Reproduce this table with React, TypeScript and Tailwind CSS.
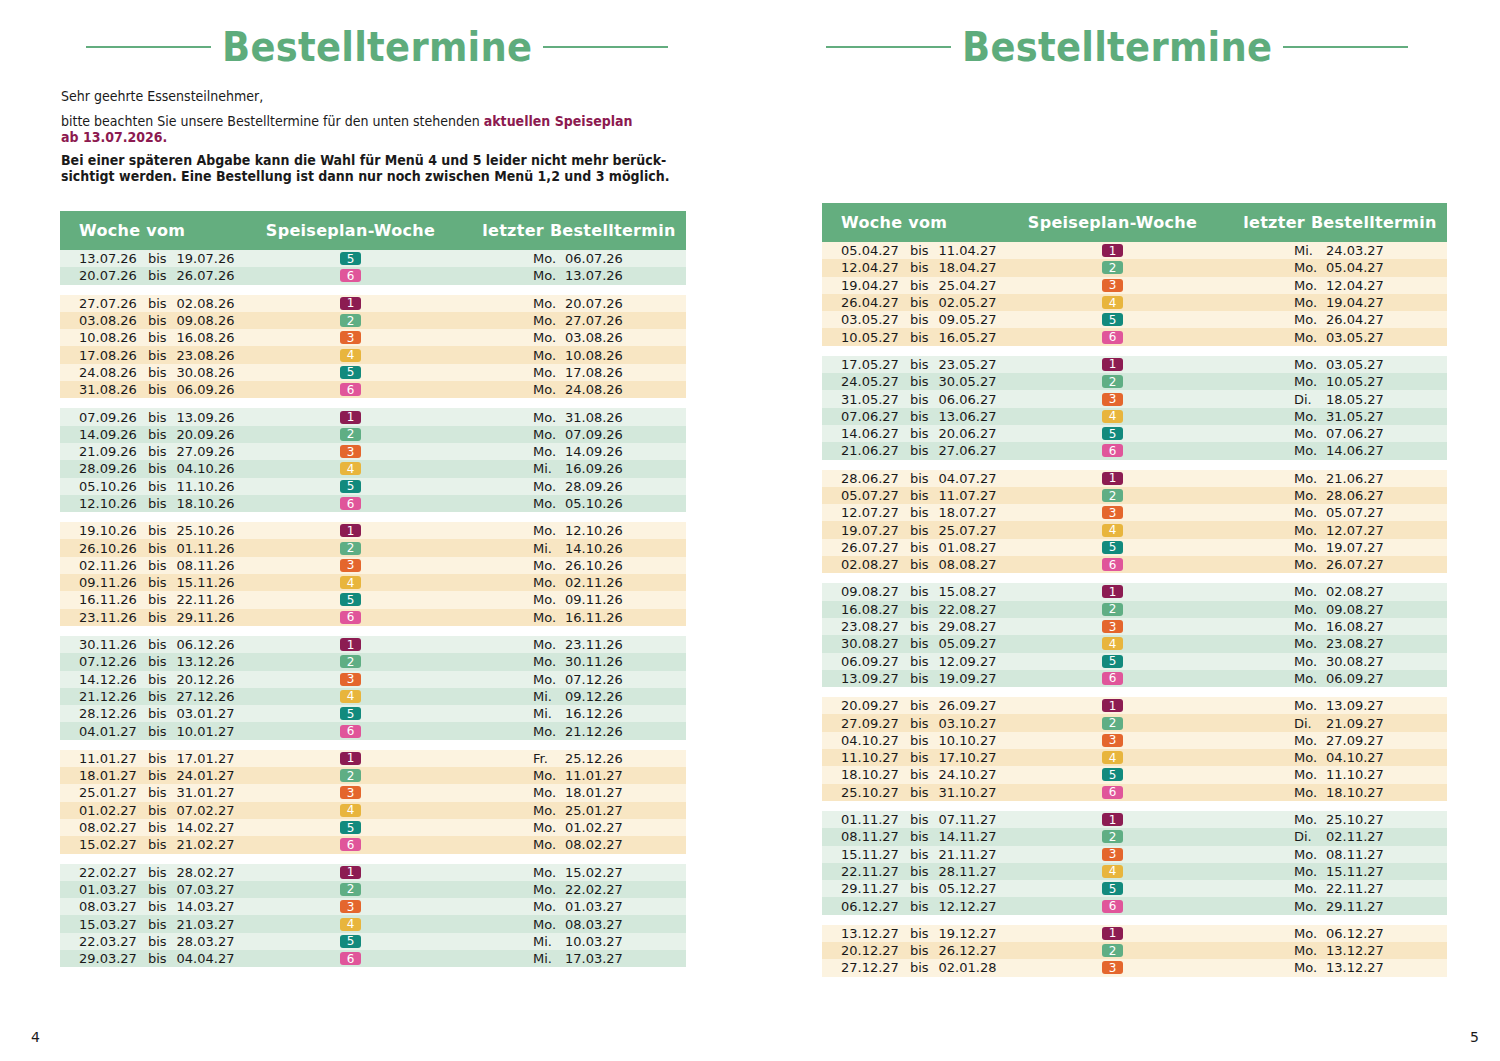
import React from "react";

type Row = [string, string, number, string, string];

const parse = (s: string): Row[] =>
  s
    .trim()
    .split("\n")
    .map((l) => {
      const p = l.trim().split(/\s+/);
      return [p[0], p[1], Number(p[2]), p[3], p[4]];
    });

const leftGroups: { tone: "g" | "b"; rows: Row[] }[] = [
  { tone: "g", rows: parse(`
13.07.26 19.07.26 5 Mo. 06.07.26
20.07.26 26.07.26 6 Mo. 13.07.26`) },
  { tone: "b", rows: parse(`
27.07.26 02.08.26 1 Mo. 20.07.26
03.08.26 09.08.26 2 Mo. 27.07.26
10.08.26 16.08.26 3 Mo. 03.08.26
17.08.26 23.08.26 4 Mo. 10.08.26
24.08.26 30.08.26 5 Mo. 17.08.26
31.08.26 06.09.26 6 Mo. 24.08.26`) },
  { tone: "g", rows: parse(`
07.09.26 13.09.26 1 Mo. 31.08.26
14.09.26 20.09.26 2 Mo. 07.09.26
21.09.26 27.09.26 3 Mo. 14.09.26
28.09.26 04.10.26 4 Mi. 16.09.26
05.10.26 11.10.26 5 Mo. 28.09.26
12.10.26 18.10.26 6 Mo. 05.10.26`) },
  { tone: "b", rows: parse(`
19.10.26 25.10.26 1 Mo. 12.10.26
26.10.26 01.11.26 2 Mi. 14.10.26
02.11.26 08.11.26 3 Mo. 26.10.26
09.11.26 15.11.26 4 Mo. 02.11.26
16.11.26 22.11.26 5 Mo. 09.11.26
23.11.26 29.11.26 6 Mo. 16.11.26`) },
  { tone: "g", rows: parse(`
30.11.26 06.12.26 1 Mo. 23.11.26
07.12.26 13.12.26 2 Mo. 30.11.26
14.12.26 20.12.26 3 Mo. 07.12.26
21.12.26 27.12.26 4 Mi. 09.12.26
28.12.26 03.01.27 5 Mi. 16.12.26
04.01.27 10.01.27 6 Mo. 21.12.26`) },
  { tone: "b", rows: parse(`
11.01.27 17.01.27 1 Fr. 25.12.26
18.01.27 24.01.27 2 Mo. 11.01.27
25.01.27 31.01.27 3 Mo. 18.01.27
01.02.27 07.02.27 4 Mo. 25.01.27
08.02.27 14.02.27 5 Mo. 01.02.27
15.02.27 21.02.27 6 Mo. 08.02.27`) },
  { tone: "g", rows: parse(`
22.02.27 28.02.27 1 Mo. 15.02.27
01.03.27 07.03.27 2 Mo. 22.02.27
08.03.27 14.03.27 3 Mo. 01.03.27
15.03.27 21.03.27 4 Mo. 08.03.27
22.03.27 28.03.27 5 Mi. 10.03.27
29.03.27 04.04.27 6 Mi. 17.03.27`) },
];

const rightGroups: { tone: "g" | "b"; rows: Row[] }[] = [
  { tone: "b", rows: parse(`
05.04.27 11.04.27 1 Mi. 24.03.27
12.04.27 18.04.27 2 Mo. 05.04.27
19.04.27 25.04.27 3 Mo. 12.04.27
26.04.27 02.05.27 4 Mo. 19.04.27
03.05.27 09.05.27 5 Mo. 26.04.27
10.05.27 16.05.27 6 Mo. 03.05.27`) },
  { tone: "g", rows: parse(`
17.05.27 23.05.27 1 Mo. 03.05.27
24.05.27 30.05.27 2 Mo. 10.05.27
31.05.27 06.06.27 3 Di. 18.05.27
07.06.27 13.06.27 4 Mo. 31.05.27
14.06.27 20.06.27 5 Mo. 07.06.27
21.06.27 27.06.27 6 Mo. 14.06.27`) },
  { tone: "b", rows: parse(`
28.06.27 04.07.27 1 Mo. 21.06.27
05.07.27 11.07.27 2 Mo. 28.06.27
12.07.27 18.07.27 3 Mo. 05.07.27
19.07.27 25.07.27 4 Mo. 12.07.27
26.07.27 01.08.27 5 Mo. 19.07.27
02.08.27 08.08.27 6 Mo. 26.07.27`) },
  { tone: "g", rows: parse(`
09.08.27 15.08.27 1 Mo. 02.08.27
16.08.27 22.08.27 2 Mo. 09.08.27
23.08.27 29.08.27 3 Mo. 16.08.27
30.08.27 05.09.27 4 Mo. 23.08.27
06.09.27 12.09.27 5 Mo. 30.08.27
13.09.27 19.09.27 6 Mo. 06.09.27`) },
  { tone: "b", rows: parse(`
20.09.27 26.09.27 1 Mo. 13.09.27
27.09.27 03.10.27 2 Di. 21.09.27
04.10.27 10.10.27 3 Mo. 27.09.27
11.10.27 17.10.27 4 Mo. 04.10.27
18.10.27 24.10.27 5 Mo. 11.10.27
25.10.27 31.10.27 6 Mo. 18.10.27`) },
  { tone: "g", rows: parse(`
01.11.27 07.11.27 1 Mo. 25.10.27
08.11.27 14.11.27 2 Di. 02.11.27
15.11.27 21.11.27 3 Mo. 08.11.27
22.11.27 28.11.27 4 Mo. 15.11.27
29.11.27 05.12.27 5 Mo. 22.11.27
06.12.27 12.12.27 6 Mo. 29.11.27`) },
  { tone: "b", rows: parse(`
13.12.27 19.12.27 1 Mo. 06.12.27
20.12.27 26.12.27 2 Mo. 13.12.27
27.12.27 02.01.28 3 Mo. 13.12.27`) },
];

const badgeBg: Record<number, string> = {
  1: "bg-[#8c1c52]",
  2: "bg-[#5fae84]",
  3: "bg-[#e4662d]",
  4: "bg-[#e8b53d]",
  5: "bg-[#128a7d]",
  6: "bg-[#e0559a]",
};

const rowBg = {
  g: ["bg-[#e7f2ea]", "bg-[#d3e8db]"],
  b: ["bg-[#fcf3e0]", "bg-[#f8e6c3]"],
};

function Title() {
  return (
    <div className="flex items-center">
      <div className="h-[2px] w-[125px] bg-[#63ad7f]" />
      <div className="mx-[11px] text-[41px] leading-[48px] font-bold tracking-[0.3px] text-[#5eac7c] font-['DejaVu_Sans_Condensed','DejaVu_Sans',sans-serif]">
        Bestelltermine
      </div>
      <div className="h-[2px] w-[125px] bg-[#63ad7f]" />
    </div>
  );
}

function Table({ groups, width }: { groups: { tone: "g" | "b"; rows: Row[] }[]; width: string }) {
  return (
    <div className={`${width} flex flex-col gap-[10px] font-['DejaVu_Sans',sans-serif]`}>
      <div>
        <div className="grid h-[39px] grid-cols-[200px_181px_1fr_214px] items-center bg-[#64ae7f] text-[16px] font-bold tracking-[0.3px] text-white">
          <div className="pl-[19px]">Woche vom</div>
          <div className="text-center whitespace-nowrap">Speiseplan-Woche</div>
          <div />
          <div className="text-center whitespace-nowrap">letzter Bestelltermin</div>
        </div>
        {groups[0] && <Group g={groups[0]} />}
      </div>
      {groups.slice(1).map((g, i) => (
        <Group key={i} g={g} />
      ))}
    </div>
  );
}

function Group({ g }: { g: { tone: "g" | "b"; rows: Row[] } }) {
  return (
    <div className="flex flex-col">
      {g.rows.map((r, i) => (
        <div
          key={i}
          className={`grid h-[17.3px] grid-cols-[200px_181px_1fr_214px] items-center text-[13px] leading-none text-[#1a1a1a] ${rowBg[g.tone][i % 2]}`}
        >
          <div className="flex pl-[19px] whitespace-nowrap">
            <span>{r[0]}</span>
            <span className="ml-[11px]">bis</span>
            <span className="ml-[10px]">{r[1]}</span>
          </div>
          <div className="flex justify-center">
            <span
              className={`flex h-[13px] w-[21px] items-center justify-center rounded-[3px] text-[12px] leading-none text-white ${badgeBg[r[2]]}`}
            >
              {r[2]}
            </span>
          </div>
          <div />
          <div className="flex pl-[61px] whitespace-nowrap">
            <span className="w-[32px]">{r[3]}</span>
            <span>{r[4]}</span>
          </div>
        </div>
      ))}
    </div>
  );
}

export default function App() {
  return (
    <div className="flex h-[1061px] w-[1500px] bg-white font-['DejaVu_Sans',sans-serif] text-[#1a1a1a]">
      <div className="flex h-full w-[750px] flex-col">
        <div className="pl-[86px] pt-[23px]">
          <Title />
        </div>
        <div className="mt-[17px] pl-[61px] text-[14px] leading-[16px] whitespace-nowrap font-['DejaVu_Sans_Condensed','DejaVu_Sans',sans-serif]">
          <p>Sehr geehrte Essensteilnehmer,</p>
          <p className="mt-[9px]">
            bitte beachten Sie unsere Bestelltermine für den unten stehenden{" "}
            <span className="font-bold text-[#8c1a50]">aktuellen Speiseplan</span>
            <br />
            <span className="font-bold text-[#8c1a50]">ab 13.07.2026.</span>
          </p>
          <p className="mt-[7px] font-bold">
            Bei einer späteren Abgabe kann die Wahl für Menü 4 und 5 leider nicht mehr berück-
            <br />
            sichtigt werden. Eine Bestellung ist dann nur noch zwischen Menü 1,2 und 3 möglich.
          </p>
        </div>
        <div className="mt-[27px] pl-[60px]">
          <Table groups={leftGroups} width="w-[626px]" />
        </div>
        <div className="mt-auto pb-[16px] pl-[31px] text-[14px] leading-[16px]">4</div>
      </div>
      <div className="flex h-full w-[750px] flex-col">
        <div className="pl-[76px] pt-[23px]">
          <Title />
        </div>
        <div className="mt-[132px] pl-[72px]">
          <Table groups={rightGroups} width="w-[625px]" />
        </div>
        <div className="mt-auto flex justify-end pb-[16px] pr-[21px] text-[14px] leading-[16px]">5</div>
      </div>
    </div>
  );
}
